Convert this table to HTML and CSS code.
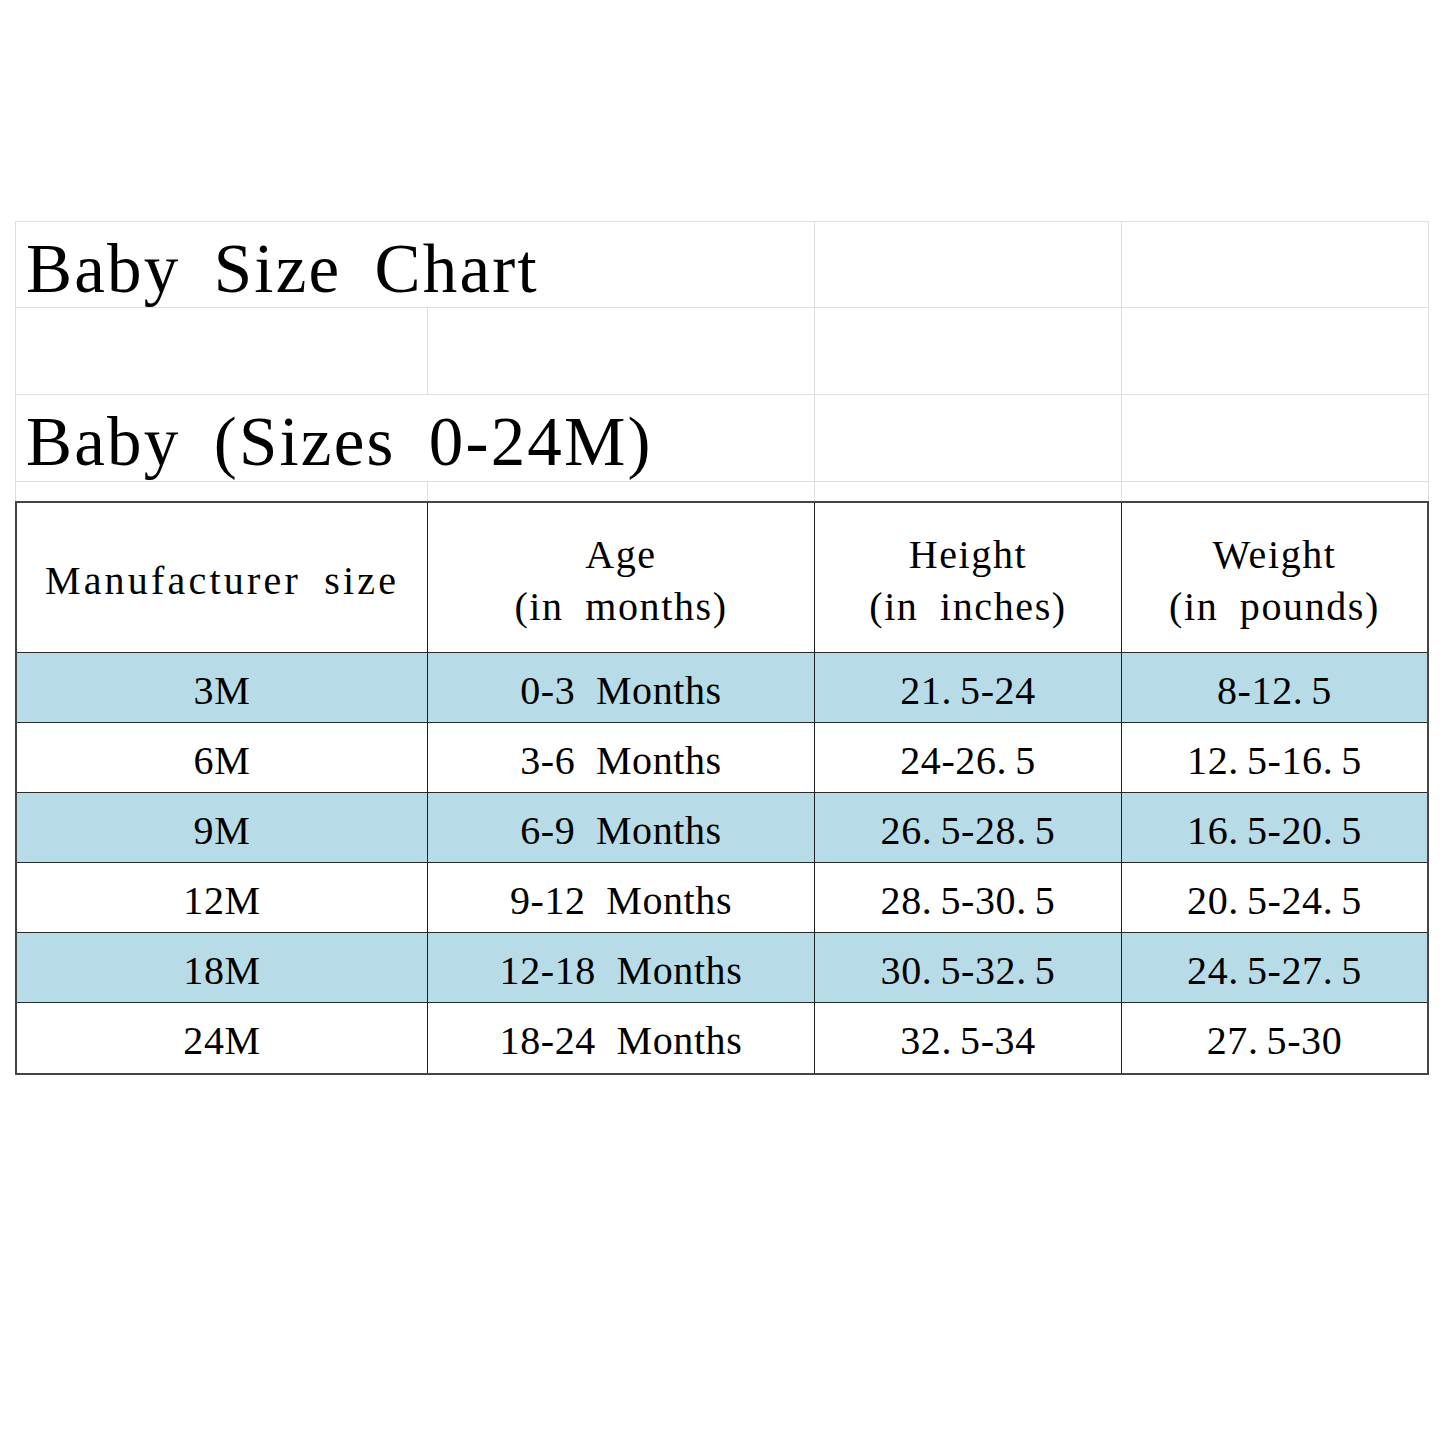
FILE: index.html
```html
<!DOCTYPE html>
<html lang="en">
<head>
<meta charset="utf-8">
<title>Baby Size Chart</title>
<link rel="stylesheet" href="styles.css">
</head>
<body>
<div class="page">
  <div class="sheet">
    <div class="cell span2 title-cell"><span class="title">Baby Size Chart</span></div>
    <div class="cell"></div>
    <div class="cell"></div>
    <div class="cell"></div>
    <div class="cell"></div>
    <div class="cell"></div>
    <div class="cell"></div>
    <div class="cell span2 title-cell"><span class="title">Baby (Sizes 0-24M)</span></div>
    <div class="cell"></div>
    <div class="cell"></div>
    <div class="cell last-row"></div>
    <div class="cell last-row"></div>
    <div class="cell last-row"></div>
    <div class="cell last-row"></div>
  </div>
  <div class="chart">
    <div class="c head"><span class="tx hd wide">Manufacturer size</span></div>
    <div class="c head"><span class="tx hd">Age</span><span class="tx hd">(in months)</span></div>
    <div class="c head"><span class="tx hd">Height</span><span class="tx hd">(in inches)</span></div>
    <div class="c head end"><span class="tx hd">Weight</span><span class="tx hd">(in pounds)</span></div>

    <div class="c blue"><span class="tx">3M</span></div>
    <div class="c blue"><span class="tx">0-3 Months</span></div>
    <div class="c blue"><span class="tx">21<span class="dot">.</span>5-24</span></div>
    <div class="c blue end"><span class="tx">8-12<span class="dot">.</span>5</span></div>

    <div class="c"><span class="tx">6M</span></div>
    <div class="c"><span class="tx">3-6 Months</span></div>
    <div class="c"><span class="tx">24-26<span class="dot">.</span>5</span></div>
    <div class="c end"><span class="tx">12<span class="dot">.</span>5-16<span class="dot">.</span>5</span></div>

    <div class="c blue"><span class="tx">9M</span></div>
    <div class="c blue"><span class="tx">6-9 Months</span></div>
    <div class="c blue"><span class="tx">26<span class="dot">.</span>5-28<span class="dot">.</span>5</span></div>
    <div class="c blue end"><span class="tx">16<span class="dot">.</span>5-20<span class="dot">.</span>5</span></div>

    <div class="c"><span class="tx">12M</span></div>
    <div class="c"><span class="tx">9-12 Months</span></div>
    <div class="c"><span class="tx">28<span class="dot">.</span>5-30<span class="dot">.</span>5</span></div>
    <div class="c end"><span class="tx">20<span class="dot">.</span>5-24<span class="dot">.</span>5</span></div>

    <div class="c blue"><span class="tx">18M</span></div>
    <div class="c blue"><span class="tx">12-18 Months</span></div>
    <div class="c blue"><span class="tx">30<span class="dot">.</span>5-32<span class="dot">.</span>5</span></div>
    <div class="c blue end"><span class="tx">24<span class="dot">.</span>5-27<span class="dot">.</span>5</span></div>

    <div class="c bottom"><span class="tx">24M</span></div>
    <div class="c bottom"><span class="tx">18-24 Months</span></div>
    <div class="c bottom"><span class="tx">32<span class="dot">.</span>5-34</span></div>
    <div class="c bottom end"><span class="tx">27<span class="dot">.</span>5-30</span></div>
  </div>
</div>
</body>
</html>
```

FILE: styles.css
```css
html, body {
  margin: 0;
  padding: 0;
  background: #ffffff;
}

body {
  font-family: "Liberation Serif", "DejaVu Serif", serif;
  color: #000000;
}

.page {
  padding: 221px 0 0 15px;
  height: 1223px;
}

.sheet {
  display: grid;
  grid-template-columns: 412px 387px 307px 307px;
  grid-template-rows: 86px 87px 87px 19px;
  width: 1414px;
  box-sizing: border-box;
  border-top: 1px solid #dedede;
  border-left: 1px solid #dedede;
}

.cell {
  box-sizing: border-box;
  border-right: 1px solid #dedede;
  border-bottom: 1px solid #dedede;
}

.cell.last-row {
  border-bottom: none;
}

.span2 {
  grid-column: span 2;
}

.title-cell {
  display: flex;
  align-items: flex-start;
  padding: 17px 0 0 10px;
}

.title {
  font-size: 69px;
  line-height: 60px;
  white-space: nowrap;
  letter-spacing: 2.2px;
  word-spacing: 0.2em;
}

.chart {
  display: grid;
  grid-template-columns: 411px 387px 307px 305px;
  grid-template-rows: 150px repeat(6, 70px);
  width: 1414px;
  box-sizing: border-box;
  border: 2px solid #454545;
}

.c {
  box-sizing: border-box;
  border-right: 1px solid #1e1e1e;
  border-bottom: 1px solid #2a2a2a;
  display: flex;
  flex-direction: column;
  align-items: center;
  justify-content: center;
  padding-top: 6px;
  font-size: 40px;
  line-height: 52px;
}

.c.end {
  border-right: none;
}

.c.bottom {
  border-bottom: none;
}

.c.blue {
  background: #b7dce7;
}

.tx {
  white-space: nowrap;
  letter-spacing: 0.6px;
  word-spacing: 0.25em;
}

.tx.hd {
  letter-spacing: 1.6px;
}

.tx.hd.wide {
  letter-spacing: 3.2px;
}

.dot {
  padding-right: 8px;
}
```
